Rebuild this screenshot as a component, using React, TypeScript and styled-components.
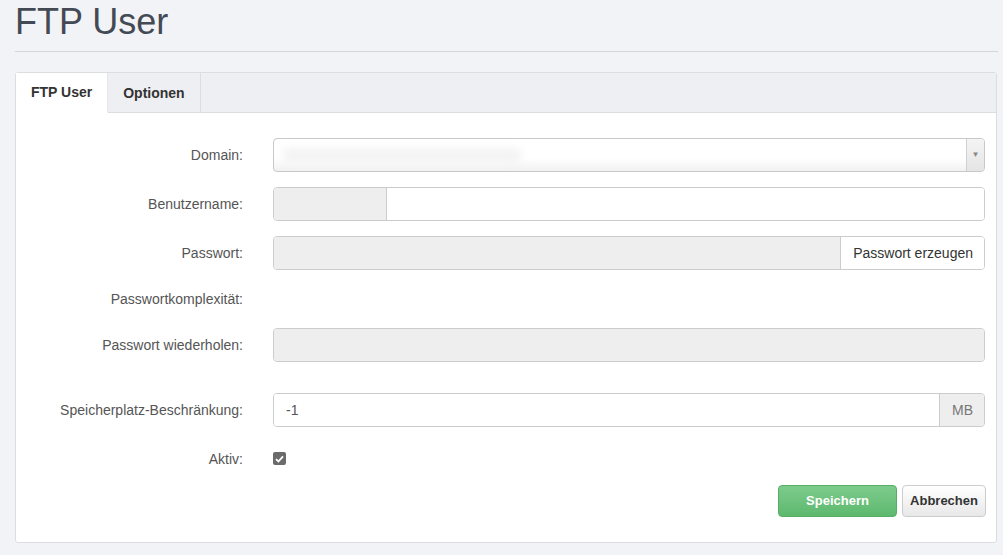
import React from "react";
import styled, { createGlobalStyle } from "styled-components";

const Global = createGlobalStyle`
  html, body { margin: 0; padding: 0; }
  body {
    background: #f2f3f6;
    font-family: "Liberation Sans", Arial, sans-serif;
    font-size: 14px;
    color: #555;
  }
  * { box-sizing: border-box; }
`;

const Page = styled.div`
  padding: 0 5px 0 15px;
`;

const Title = styled.h1`
  margin: 2px 0 0 0;
  font-size: 36px;
  line-height: 1.1;
  font-weight: 400;
  color: #434a54;
`;

const Rule = styled.hr`
  margin: 9px 0 0 0;
  border: 0;
  border-top: 1px solid #d3d5da;
`;

const Panel = styled.div`
  margin: 20px 1px 0 0;
  background: #fff;
  border: 1px solid #dcdde1;
  border-radius: 3px;
`;

const TabBar = styled.div`
  display: flex;
  height: 40px;
  background: #eeeff2;
  border-bottom: 1px solid #dcdde1;
`;

const Tab = styled.div<{ $active?: boolean }>`
  height: 40px;
  padding: 0 15px;
  display: flex;
  align-items: center;
  font-size: 14px;
  font-weight: 700;
  color: #333;
  background: ${(p) => (p.$active ? "#fff" : "transparent")};
  border-right: 1px solid #dcdde1;
  ${(p) => (p.$active ? "border-bottom: 1px solid #fff; border-right-color: #e4e5e8;" : "")}
`;

const Body = styled.div`
  padding: 25px 11px 25px 0;
`;

const Row = styled.div<{ $height?: number; $gap?: number }>`
  display: grid;
  grid-template-columns: 227px 1fr;
  column-gap: 30px;
  align-items: center;
  min-height: ${(p) => p.$height ?? 34}px;
  margin-bottom: ${(p) => p.$gap ?? 15}px;
`;

const Label = styled.div`
  text-align: right;
  font-size: 14px;
  color: #555;
`;

const Group = styled.div`
  display: flex;
  height: 34px;
  border: 1px solid #ccc;
  border-radius: 4px;
  overflow: hidden;
`;

const Addon = styled.div<{ $width?: number; $white?: boolean; $textColor?: string }>`
  flex: 0 0 ${(p) => (p.$width ? `${p.$width}px` : "auto")};
  display: flex;
  align-items: center;
  justify-content: center;
  padding: 0 11px 0 12px;
  background: ${(p) => (p.$white ? "#fff" : "#eeeeee")};
  color: ${(p) => p.$textColor ?? "#333"};
  font-size: 14px;
`;

const Field = styled.div<{ $gray?: boolean }>`
  flex: 1;
  display: flex;
  align-items: center;
  padding: 0 12px;
  background: ${(p) => (p.$gray ? "#eeeeee" : "#fff")};
  color: #555;
  font-size: 14px;
`;

const LeftSep = styled.div`
  width: 1px;
  background: #ccc;
`;

const SelectBox = styled.div`
  display: flex;
  height: 34px;
  border: 1px solid #c8c8c8;
  border-radius: 4px;
  overflow: hidden;
  background: linear-gradient(#fff 0%, #fff 60%, #f1f1f1 100%);
`;

const SelectValue = styled.div`
  flex: 1;
  position: relative;
`;

const Blur = styled.div`
  position: absolute;
  left: 8px;
  top: 9px;
  width: 240px;
  height: 15px;
  border-radius: 8px;
  background: #f3f3f3;
  filter: blur(4px);
`;

const Arrow = styled.div`
  flex: 0 0 18px;
  border-left: 1px solid #d0d0d0;
  background: linear-gradient(#f4f4f4, #e4e4e4);
  display: flex;
  align-items: center;
  justify-content: center;
  color: #888;
  font-size: 8px;
`;

const Check = styled.div`
  width: 13px;
  height: 13px;
  border-radius: 2px;
  background: #6b6b6b;
  display: flex;
  align-items: center;
  justify-content: center;
`;

const Actions = styled.div`
  display: flex;
  justify-content: flex-end;
  gap: 5px;
  margin-right: -1px;
`;

const Button = styled.button<{ $primary?: boolean; $width: number }>`
  width: ${(p) => p.$width}px;
  height: 32px;
  border-radius: 4px;
  font-family: "Liberation Sans", Arial, sans-serif;
  font-size: 13px;
  font-weight: 700;
  cursor: pointer;
  ${(p) =>
    p.$primary
      ? `background: linear-gradient(#7dcb8c, #5db96e);
         border: 1px solid #55ad66;
         color: #fff;`
      : `background: linear-gradient(#fff, #e8e8e8);
         border: 1px solid #ccc;
         color: #333;`}
`;

export default function App() {
  return (
    <>
      <Global />
      <Page>
        <Title>FTP User</Title>
        <Rule />
        <Panel>
          <TabBar>
            <Tab $active>FTP User</Tab>
            <Tab>Optionen</Tab>
          </TabBar>
          <Body>
            <Row>
              <Label>Domain:</Label>
              <SelectBox>
                <SelectValue>
                  <Blur />
                </SelectValue>
                <Arrow>▼</Arrow>
              </SelectBox>
            </Row>
            <Row>
              <Label>Benutzername:</Label>
              <Group>
                <Addon $width={112} />
                <LeftSep />
                <Field />
              </Group>
            </Row>
            <Row>
              <Label>Passwort:</Label>
              <Group>
                <Field $gray />
                <LeftSep />
                <Addon $white>Passwort erzeugen</Addon>
              </Group>
            </Row>
            <Row $height={28}>
              <Label>Passwortkomplexität:</Label>
              <div />
            </Row>
            <Row $gap={31}>
              <Label>Passwort wiederholen:</Label>
              <Group>
                <Field $gray />
              </Group>
            </Row>
            <Row>
              <Label>Speicherplatz-Beschränkung:</Label>
              <Group>
                <Field>-1</Field>
                <LeftSep />
                <Addon $textColor="#777">MB</Addon>
              </Group>
            </Row>
            <Row $gap={9}>
              <Label>Aktiv:</Label>
              <Check>
                <svg width="9" height="8" viewBox="0 0 9 8">
                  <path d="M1 4.2 L3.4 6.5 L8 1.3" stroke="#fff" strokeWidth="1.8" fill="none" />
                </svg>
              </Check>
            </Row>
            <Actions>
              <Button $primary $width={119}>Speichern</Button>
              <Button $width={84}>Abbrechen</Button>
            </Actions>
          </Body>
        </Panel>
      </Page>
    </>
  );
}
